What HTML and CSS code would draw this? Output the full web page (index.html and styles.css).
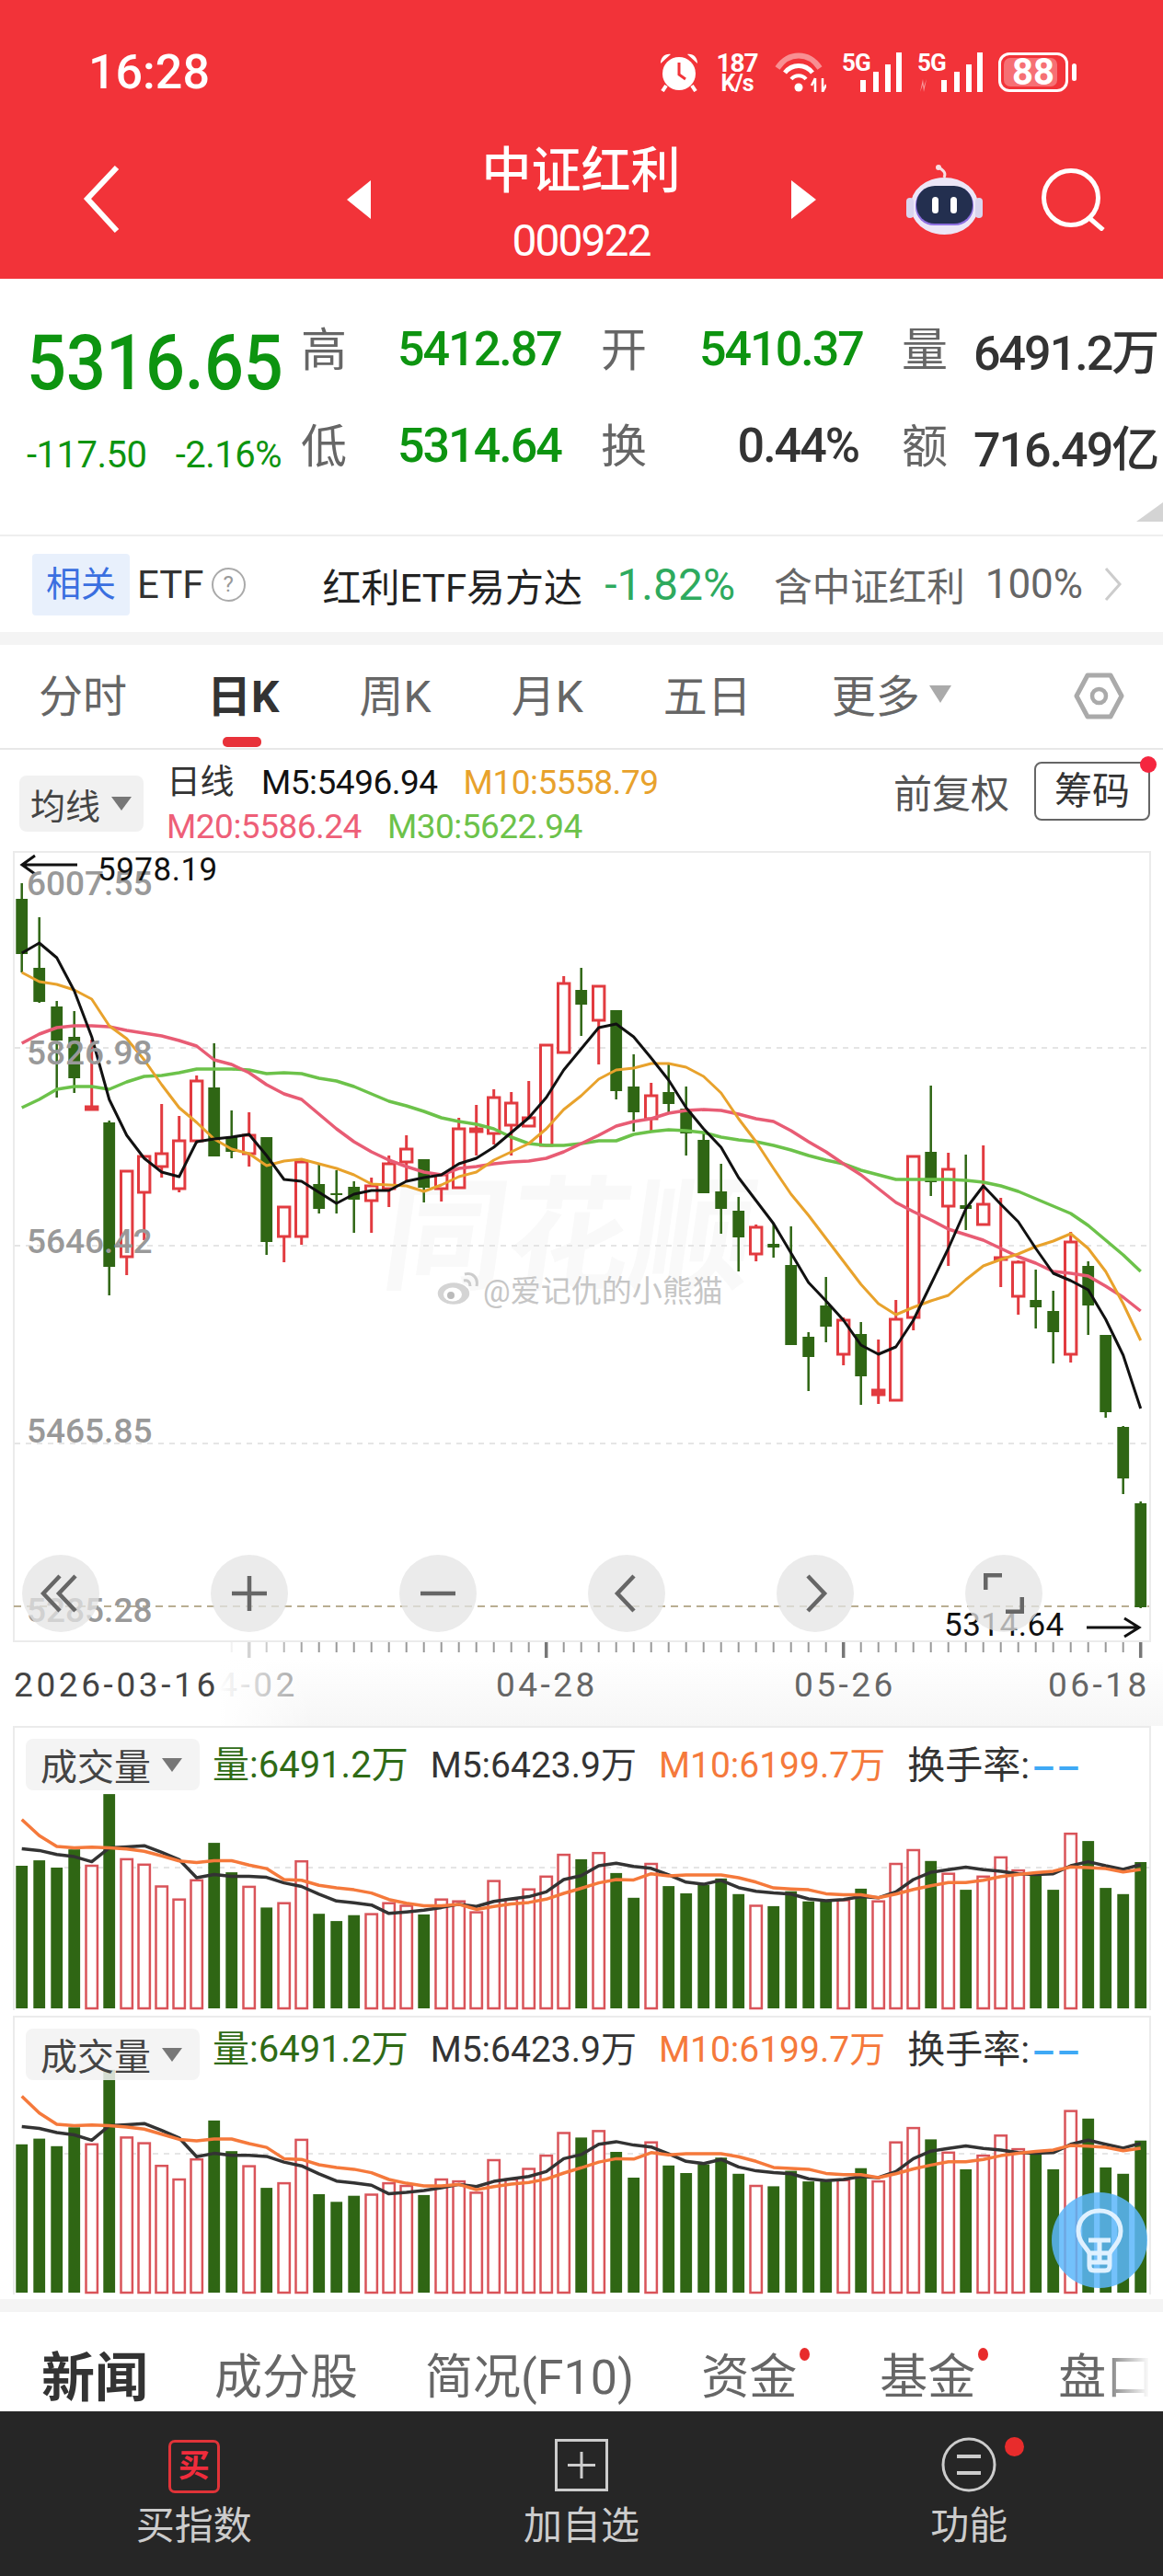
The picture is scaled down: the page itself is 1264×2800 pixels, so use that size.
FILE: index.html
```html
<!DOCTYPE html>
<html lang="zh-CN">
<head>
  <meta charset="UTF-8">
  <meta name="viewport" content="width=device-width, initial-scale=1.0">
  <title>中证红利 000922</title>
  <link rel="stylesheet" href="styles.css">
</head>
<body>
  <header class="top">
    <div class="status">
      <span class="time">16:28</span>
      <div class="status-icons">
        <svg width="44" height="43" viewBox="0 0 44 43">
          <circle cx="22" cy="23" r="18" fill="#fff"/>
          <path d="M22 11v13l7 5" fill="none" stroke="#f23339" stroke-width="3"/>
          <path d="M2 12C2 5 7 1 13 2L2 12zM42 12c0-7-5-11-11-10l11 10z" fill="#fff"/>
          <path d="M8 36l-4 6M36 36l4 6" stroke="#fff" stroke-width="4"/>
        </svg>
        <div class="speed"><span>187</span><span class="speed-unit">K/s</span></div>
        <svg width="56" height="43" viewBox="0 0 56 43">
          <path d="M3 17C15 -1 37 -1 49 17" fill="none" stroke="#fff" stroke-opacity=".45" stroke-width="6"/>
          <path d="M11 22C19 12 33 12 41 22" fill="none" stroke="#fff" stroke-width="5"/>
          <path d="M18 29C22 24 30 24 34 29" fill="none" stroke="#fff" stroke-width="4"/>
          <circle cx="26" cy="38" r="4.500" fill="#fff"/>
          <path d="M44 28v15M52 28v15M40 36l4-8M56 35l-4 8" fill="none" stroke="#fff" stroke-width="2.500"/>
        </svg>
        <div class="sig">
          <span>5G</span>
          <svg width="65" height="43" viewBox="0 0 65 43"><path d="M20 43V30h6v13zM34 43V21h6v22zM47 43V13h6v30zM59 43V0h6v43z" fill="#fff"/></svg>
        </div>
        <div class="sig sig-wide">
          <span>5G</span>
          <svg width="71" height="43" viewBox="0 0 71 43">
            <path d="M3 43l3-14 1 8 3-8-3 14-1-8z" fill="#fff" fill-opacity=".5"/>
            <path d="M26 43V30h6v13zM40 43V21h6v22zM53 43V13h6v30zM65 43V0h6v43z" fill="#fff"/>
          </svg>
        </div>
        <div class="battery"><span class="battery-fill"></span><span class="battery-num">88</span></div>
      </div>
    </div>
    <div class="nav">
      <svg class="back" width="41" height="75" viewBox="0 0 41 75"><path d="M37 3L5 37l32 35" fill="none" stroke="#fff" stroke-width="6"/></svg>
      <span class="tri-left"></span>
      <div class="title">
        <div class="name">中证红利</div>
        <div class="code">000922</div>
      </div>
      <span class="tri-right"></span>
      <svg class="robot" width="83" height="76" viewBox="0 0 83 76">
        <path d="M41 14C44 8 39 6 36 3" fill="none" stroke="#f7dfe4" stroke-width="3"/>
        <circle cx="35" cy="3" r="3" fill="#f7dfe4"/>
        <ellipse cx="41.500" cy="45" rx="37" ry="31" fill="#ece6f7"/>
        <rect x="0" y="36" width="8" height="22" rx="4" fill="#d9d5ee"/>
        <rect x="75" y="36" width="8" height="22" rx="4" fill="#d9d5ee"/>
        <rect x="10" y="24" width="63" height="42" rx="20" fill="#8d6fe0"/>
        <rect x="11" y="23" width="61" height="41" rx="20" fill="#232f4f"/>
        <rect x="28" y="35" width="7" height="18" rx="3.500" fill="#fff"/>
        <rect x="48" y="35" width="7" height="18" rx="3.500" fill="#fff"/>
      </svg>
      <svg class="search" width="70" height="68" viewBox="0 0 70 68"><circle cx="33" cy="32" r="29.500" fill="none" stroke="#fff" stroke-width="5"/><path d="M53 54l15 13" fill="none" stroke="#fff" stroke-width="5"/></svg>
    </div>
  </header>

  <section class="info">
    <div class="price">5316.65</div>
    <div class="lbl">高</div><div class="val down">5412.87</div>
    <div class="lbl">开</div><div class="val down">5410.37</div>
    <div class="lbl">量</div><div class="val">6491.2万</div>
    <div class="change"><span>-117.50</span><span>-2.16%</span></div>
    <div class="lbl">低</div><div class="val down">5314.64</div>
    <div class="lbl">换</div><div class="val right">0.44%</div>
    <div class="lbl">额</div><div class="val">716.49亿</div>
    <span class="corner"></span>
  </section>

  <section class="etf">
    <span class="chip-blue">相关</span>
    <span class="etf-name">ETF</span>
    <span class="help">?</span>
    <span class="fund">红利ETF易方达</span>
    <span class="fund-pct">-1.82%</span>
    <span class="fund-hold">含中证红利</span>
    <span class="fund-num">100%</span>
    <svg class="etf-arrow" width="21" height="38" viewBox="0 0 21 38"><path d="M3 2l15 17L3 36" fill="none" stroke="#ccc" stroke-width="3"/></svg>
  </section>
  <div class="strip"></div>

  <nav class="tabs">
    <span>分时</span>
    <span class="active">日K</span>
    <span>周K</span>
    <span>月K</span>
    <span>五日</span>
    <span class="more">更多<i class="caret-big"></i></span>
    <svg class="hex" width="55" height="51" viewBox="0 0 55 51"><path d="M3 25.500L15 3h25l12 22.500L40 48H15z" fill="none" stroke="#aaa" stroke-width="5" stroke-linejoin="round"/><circle cx="27.500" cy="25.500" r="7.500" fill="none" stroke="#aaa" stroke-width="4.500"/></svg>
  </nav>

  <section class="chart-head">
    <div class="chip">均线<i class="caret"></i></div>
    <div class="ma-lines">
      <div class="ma-row">
        <span class="ma-day">日线</span><span class="c-black">M5:5496.94</span><span class="c-orange">M10:5558.79</span>
      </div>
      <div class="ma-row">
        <span class="c-pink">M20:5586.24</span><span class="c-green">M30:5622.94</span>
      </div>
    </div>
    <span class="adjust">前复权</span>
    <span class="chips-btn">筹码</span>
  </section>

  <section class="kline">
    <div class="wm-big">同花顺</div>
    <svg id="kline-svg" class="plot" width="1233" height="856" viewBox="16 927 1233 856"></svg>
    <span class="ax-label l1">6007.55</span>
    <span class="ax-label l2">5826.98</span>
    <span class="ax-label l3">5646.42</span>
    <span class="ax-label l4">5465.85</span>
    <span class="ax-label l5">5285.28</span>
    <span class="mark m-high">5978.19</span>
    <span class="mark m-low">5314.64</span>
    <div class="weibo">
      <svg width="46" height="36" viewBox="0 0 46 36">
        <ellipse cx="19" cy="23" rx="18" ry="12.500" fill="#d4d4d4" stroke="#fff" stroke-width="1.500"/>
        <ellipse cx="18" cy="24" rx="10" ry="7.500" fill="#fff"/>
        <circle cx="16" cy="25" r="4" fill="#bbb"/>
        <path d="M30 9c4-1 7 1 7 6M31 2c9-2 15 4 13 13" fill="none" stroke="#ccc" stroke-width="3"/>
      </svg>
      <span>@爱记仇的小熊猫</span>
    </div>
    <div class="chart-btns">
      <span class="round"><svg width="44" height="44" viewBox="0 0 44 44"><path d="M21 3L3 22l18 19M38 3L20 22l18 19" fill="none" stroke="#666" stroke-width="4.500"/></svg></span>
      <span class="round"><svg width="44" height="44" viewBox="0 0 44 44"><path d="M22 3v38M3 22h38" fill="none" stroke="#666" stroke-width="4.500"/></svg></span>
      <span class="round"><svg width="44" height="44" viewBox="0 0 44 44"><path d="M3 22h38" fill="none" stroke="#666" stroke-width="4.500"/></svg></span>
      <span class="round"><svg width="44" height="44" viewBox="0 0 44 44"><path d="M30 3L12 22l18 19" fill="none" stroke="#666" stroke-width="4.500"/></svg></span>
      <span class="round"><svg width="44" height="44" viewBox="0 0 44 44"><path d="M14 3l18 19-18 19" fill="none" stroke="#666" stroke-width="4.500"/></svg></span>
      <span class="round"><svg width="44" height="44" viewBox="0 0 44 44"><path d="M2 18V2h18M42 26v16H24" fill="none" stroke="#666" stroke-width="5"/></svg></span>
    </div>
  </section>

  <div class="axis">
    <svg id="tick-svg" class="ticks" width="1264" height="91" viewBox="0 1785 1264 91"></svg>
    <span class="date d2">04-02</span>
    <span class="axis-fade"></span>
    <span class="date d1">2026-03-16</span>
    <span class="date d3">04-28</span>
    <span class="date d4">05-26</span>
    <span class="date d5">06-18</span>
  </div>

  <section class="vol">
    <svg id="vol-a" class="plot" width="1233" height="307" viewBox="16 1878 1233 307"></svg>
    <div class="vol-head">
      <div class="chip chip-vol">成交量<i class="caret"></i></div>
      <span class="c-dgreen">量:6491.2万</span>
      <span class="c-dark">M5:6423.9万</span>
      <span class="c-vorange">M10:6199.7万</span>
      <span class="c-turn">换手率:<b class="dashes">––</b></span>
    </div>
  </section>
  <section class="vol vol-second">
    <svg id="vol-b" class="plot" width="1233" height="301" viewBox="16 2193 1233 301"></svg>
    <div class="vol-head">
      <div class="chip chip-vol">成交量<i class="caret"></i></div>
      <span class="c-dgreen">量:6491.2万</span>
      <span class="c-dark">M5:6423.9万</span>
      <span class="c-vorange">M10:6199.7万</span>
      <span class="c-turn">换手率:<b class="dashes">––</b></span>
    </div>
    <div class="fab">
      <svg width="60" height="72" viewBox="0 0 60 72">
        <path d="M19 50C14 42 7 37 7 26C7 13 17 4 30 4s23 9 23 22c0 11-7 16-12 24z" fill="none" stroke="#dff1ff" stroke-width="5"/>
        <path d="M19 50v14q0 5 5 5h12q5 0 5-5V50M18 36h24M30 36v24M20 60h20" fill="none" stroke="#dff1ff" stroke-width="5"/>
      </svg>
    </div>
  </section>
  <div class="vol-end"></div>
  <div class="strip"></div>

  <nav class="news-tabs">
    <span class="news-active">新闻</span>
    <span>成分股</span>
    <span>简况(F10)</span>
    <span class="dot">资金</span>
    <span class="dot">基金</span>
    <span>盘口</span>
    <i class="news-fade"></i>
  </nav>

  <footer class="bottom">
    <div class="bottom-item">
      <span class="buy-icon">买</span>
      <span class="bottom-label">买指数</span>
    </div>
    <div class="bottom-item">
      <svg width="58" height="60" viewBox="0 0 58 60"><rect x="1.500" y="3.500" width="55" height="54" fill="none" stroke="#ccc" stroke-width="3"/><path d="M29 16v29M14 30.500h30" fill="none" stroke="#ccc" stroke-width="3"/></svg>
      <span class="bottom-label">加自选</span>
    </div>
    <div class="bottom-item">
      <span class="func-wrap">
        <svg width="60" height="60" viewBox="0 0 60 60"><circle cx="30" cy="30" r="28" fill="none" stroke="#ccc" stroke-width="3"/><path d="M17 21h26M17 39h26" stroke="#ccc" stroke-width="4"/></svg>
        <i class="func-dot"></i>
      </span>
      <span class="bottom-label">功能</span>
    </div>
  </footer>

  <script src="script.js"></script>
</body>
</html>
```

FILE: styles.css
```css
* {
  margin: 0;
  padding: 0;
  box-sizing: border-box;
}

body {
  width: 1264px;
  height: 2800px;
  overflow: hidden;
  background-color: #fff;
  font-family: Roboto, "Noto Sans CJK SC", sans-serif;
  color: #333;
}

i {
  font-style: normal;
}

/* top red bar */
.top {
  height: 303px;
  background-color: #f23339;
  color: #fff;
}

.status {
  height: 130px;
  padding: 57px 94px 0 96px;
  display: flex;
  justify-content: space-between;
}

.time {
  font-size: 52px;
  font-weight: 500;
  line-height: 44px;
}

.status-icons {
  display: flex;
  gap: 17px;
  height: 43px;
}

.speed {
  width: 48px;
  display: flex;
  flex-direction: column;
  align-items: center;
  font-size: 28px;
  font-weight: 700;
  line-height: 24px;
  letter-spacing: -1px;
}

.speed-unit {
  font-size: 25px;
  line-height: 20px;
}

.sig {
  position: relative;
  width: 65px;
  height: 43px;
}

.sig-wide {
  width: 71px;
}

.sig span {
  position: absolute;
  left: 0;
  top: -2px;
  font-size: 26px;
  font-weight: 700;
  line-height: 26px;
  letter-spacing: -1px;
}

.sig svg {
  position: absolute;
  left: 0;
  top: 0;
}

.battery {
  position: relative;
  width: 76px;
  height: 43px;
  margin-right: 9px;
  border: 3px solid #fff;
  border-radius: 12px;
  display: flex;
  align-items: center;
  justify-content: center;
}

.battery::after {
  content: "";
  position: absolute;
  right: -12px;
  top: 9px;
  width: 5px;
  height: 19px;
  border-radius: 3px;
  background-color: #fff;
}

.battery-fill {
  position: absolute;
  left: 3px;
  top: 3px;
  bottom: 3px;
  width: 58px;
  border-radius: 7px;
  background-color: rgba(255, 255, 255, 0.3);
}

.battery-num {
  position: relative;
  font-size: 40px;
  font-weight: 700;
  line-height: 1;
}

.nav {
  height: 173px;
  padding-left: 90px;
  display: flex;
  align-items: center;
}

.tri-left {
  margin-left: 246px;
  border-right: 26px solid #fff;
  border-top: 21px solid transparent;
  border-bottom: 21px solid transparent;
}

.tri-right {
  border-left: 27px solid #fff;
  border-top: 21px solid transparent;
  border-bottom: 21px solid transparent;
}

.title {
  width: 457px;
  padding-top: 11px;
  text-align: center;
}

.name {
  font-size: 54px;
  font-weight: 500;
  line-height: 60px;
}

.code {
  margin-top: 20px;
  font-size: 48px;
  line-height: 50px;
  letter-spacing: -2px;
}

.robot {
  margin-left: 98px;
}

.search {
  margin-left: 63px;
}

/* quote block */
.info {
  position: relative;
  height: 280px;
  padding: 24px 0 0 29px;
  border-bottom: 2px solid #eee;
  display: grid;
  grid-template-columns: 298px 105px 221px 107px 220px 78px 204px;
  grid-template-rows: 105px 105px;
  align-items: center;
}

.lbl {
  margin-bottom: 8px;
  font-size: 50px;
  color: #666;
}

.val {
  font-size: 52px;
  font-weight: 500;
  letter-spacing: -2px;
  white-space: nowrap;
}

.down {
  color: #0d9410;
}

.right {
  padding-right: 47px;
  text-align: right;
}

.price {
  margin-top: 30px;
  font-size: 84px;
  font-weight: 500;
  line-height: 1;
  color: #0d9410;
  transform: scaleX(0.9);
  transform-origin: left;
}

.change {
  margin-top: 20px;
  width: 277px;
  display: flex;
  justify-content: space-between;
  font-size: 40px;
  letter-spacing: -0.500px;
  color: #0d9410;
}

.corner {
  position: absolute;
  right: 0;
  bottom: 14px;
  border-left: 29px solid transparent;
  border-bottom: 21px solid #d4d4d4;
}

/* related etf row */
.etf {
  height: 104px;
  padding-left: 35px;
  display: flex;
  align-items: center;
  font-size: 42px;
  white-space: nowrap;
}

.chip-blue {
  width: 106px;
  height: 67px;
  border-radius: 4px;
  background-color: #e8f0fc;
  color: #3a6fe0;
  font-size: 38px;
  line-height: 67px;
  text-align: center;
}

.etf-name {
  margin-left: 8px;
  font-size: 42px;
}

.help {
  margin-left: 8px;
  width: 37px;
  height: 37px;
  border: 2px solid #aaa;
  border-radius: 50%;
  color: #999;
  font-size: 24px;
  line-height: 33px;
  text-align: center;
}

.fund {
  margin-left: 84px;
  color: #222;
}

.fund-pct {
  margin-left: 24px;
  font-size: 48px;
  color: #2eaa5e;
}

.fund-hold {
  margin-left: 42px;
  font-size: 41.500px;
  color: #666;
}

.fund-num {
  margin-left: 22px;
  font-size: 44px;
  color: #666;
}

.etf-arrow {
  margin-left: 22px;
}

.strip {
  height: 14px;
  background-color: #f4f4f4;
}

/* period tabs */
.tabs {
  position: relative;
  height: 114px;
  padding: 24px 0 0 42px;
  border-bottom: 2px solid #e8e8e8;
  display: flex;
  gap: 87px;
  align-items: flex-start;
  font-size: 48px;
  line-height: 66px;
  color: #666;
}

.active {
  position: relative;
  font-weight: 700;
  color: #333;
}

.active::after {
  content: "";
  position: absolute;
  left: 17px;
  bottom: -21px;
  width: 42px;
  height: 11px;
  border-radius: 5px;
  background-color: #e8323a;
}

.more {
  display: flex;
  align-items: center;
  gap: 10px;
}

.caret-big {
  margin-top: -8px;
  border-top: 19px solid #aaa;
  border-left: 12px solid transparent;
  border-right: 12px solid transparent;
}

.hex {
  position: absolute;
  left: 1167px;
  top: 30px;
}

/* chart header */
.chart-head {
  position: relative;
  height: 110px;
  padding-left: 21px;
  display: flex;
  align-items: flex-start;
}

.chip {
  margin-top: 28px;
  width: 135px;
  height: 61px;
  padding-left: 12px;
  border-radius: 8px;
  background-color: #f1f1f1;
  display: flex;
  align-items: center;
  font-size: 38px;
  color: #444;
}

.caret {
  margin-left: 12px;
  border-top: 15px solid #777;
  border-left: 11px solid transparent;
  border-right: 11px solid transparent;
}

.ma-lines {
  margin: 12px 0 0 25px;
  font-size: 37px;
  line-height: 48px;
  letter-spacing: -0.500px;
}

.ma-row {
  display: flex;
  gap: 28px;
  white-space: nowrap;
}

.ma-day {
  color: #333;
  margin-left: 0;
  margin-right: 2px;
}

.c-black {
  color: #111;
}

.c-orange {
  color: #e8a22c;
}

.c-pink {
  color: #ee5f78;
}

.c-green {
  color: #6cc24a;
}

.adjust {
  position: absolute;
  left: 971px;
  top: 14px;
  font-size: 42px;
  color: #555;
}

.chips-btn {
  position: absolute;
  left: 1124px;
  top: 13px;
  width: 126px;
  height: 64px;
  border: 2px solid #666;
  border-radius: 8px;
  font-size: 41px;
  line-height: 60px;
  text-align: center;
  color: #333;
}

.chips-btn::after {
  content: "";
  position: absolute;
  right: -9px;
  top: -8px;
  width: 18px;
  height: 18px;
  border-radius: 50%;
  background-color: #f5263f;
}

/* k line chart */
.kline {
  position: relative;
  margin-left: 14px;
  width: 1237px;
  height: 860px;
  border: 2px solid #ebebeb;
}

.plot {
  position: absolute;
  left: 0;
  top: 0;
  overflow: visible;
}

.wm-big {
  position: absolute;
  left: 402px;
  top: 352px;
  font-size: 134px;
  font-weight: 700;
  line-height: 1;
  color: #f9f9f9;
  transform: skewX(-8deg);
  white-space: nowrap;
}

.ax-label {
  position: absolute;
  left: 13px;
  font-size: 37px;
  font-weight: 500;
  line-height: 36px;
  color: #999;
}

.l1 { top: 16px; }
.l2 { top: 200px; }
.l3 { top: 405px; }
.l4 { top: 611px; }
.l5 { top: 806px; }

.mark {
  position: absolute;
  font-size: 35px;
  line-height: 34px;
  letter-spacing: 0.500px;
  color: #111;
}

.m-high {
  left: 90px;
  top: 2px;
}

.m-low {
  left: 1010px;
  top: 823px;
}

.weibo {
  position: absolute;
  left: 458px;
  top: 450px;
  display: flex;
  align-items: center;
  gap: 5px;
  font-size: 33px;
  color: #c6c6c6;
  text-shadow: 0 0 2px #fff;
  white-space: nowrap;
}

.chart-btns {
  position: absolute;
  left: 8px;
  top: 763px;
  display: flex;
  gap: 121px;
}

.round {
  width: 84px;
  height: 84px;
  border-radius: 50%;
  background-color: rgba(228, 228, 228, 0.75);
  display: flex;
  align-items: center;
  justify-content: center;
}

/* date axis */
.axis {
  position: relative;
  height: 91px;
  background: linear-gradient(#fff 20%, #f6f6f6);
}

.ticks {
  position: absolute;
  left: 0;
  top: 0;
}

.date {
  position: absolute;
  top: 28px;
  font-size: 37px;
  line-height: 38px;
  letter-spacing: 3.500px;
  color: #666;
  white-space: nowrap;
}

.d1 { left: 15px; color: #444; letter-spacing: 3.600px; }
.d2 { left: 213px; color: #999; }
.d3 { left: 539px; }
.d4 { left: 863px; }
.d5 { left: 1139px; }

.axis-fade {
  position: absolute;
  left: 0;
  top: 0;
  bottom: 0;
  width: 340px;
  background: linear-gradient(to right, #fff 70%, rgba(255, 255, 255, 0));
}

/* volume panels */
.vol {
  position: relative;
  margin-left: 14px;
  width: 1237px;
  height: 309px;
  padding: 12px 0 0 12px;
  border: 2px solid #ebebeb;
  border-bottom: none;
}

.vol-second {
  margin-top: 6px;
  height: 303px;
}

.vol-head {
  position: relative;
  display: flex;
  align-items: center;
  gap: 24px;
  height: 56px;
  font-size: 39px;
  white-space: nowrap;
}

.vol-head > span {
  margin-top: -6px;
}

.vol-second .vol-head > span {
  margin-top: -18px;
}

.chip-vol {
  margin: 0 -10px 0 0;
  width: 189px;
  height: 56px;
  padding-left: 16px;
  font-size: 40px;
  background-color: rgba(242, 242, 242, 0.85);
}

.c-dgreen {
  font-size: 40px;
  color: #2f6b16;
}

.c-dark {
  color: #333;
}

.c-vorange {
  color: #f5793b;
}

.c-turn {
  font-size: 41px;
  color: #333;
}

.dashes {
  margin-left: 4px;
  font-family: "Liberation Sans", sans-serif;
  font-weight: 700;
  letter-spacing: 4px;
  color: #3fa9f5;
}

.fab {
  position: absolute;
  left: 1127px;
  top: 190px;
  width: 104px;
  height: 104px;
  border-radius: 50%;
  background-color: rgba(90, 182, 250, 0.85);
  display: flex;
  align-items: center;
  justify-content: center;
}

.vol-end {
  height: 5px;
}

/* news tabs */
.news-tabs {
  position: relative;
  height: 108px;
  padding: 36px 0 0 45px;
  display: flex;
  gap: 73px;
  align-items: center;
  font-size: 52px;
  line-height: 60px;
  color: #666;
  white-space: nowrap;
  overflow: hidden;
}

.news-active {
  margin-right: -1px;
  font-size: 58px;
  font-weight: 700;
  color: #333;
}

.dot {
  position: relative;
  padding-right: 17px;
}

.dot::after {
  content: "";
  position: absolute;
  right: 3px;
  top: -3px;
  width: 11px;
  height: 14px;
  border-radius: 50%;
  background-color: #e82c2c;
}

.news-fade {
  position: absolute;
  right: 0;
  top: 0;
  bottom: 0;
  width: 70px;
  background: linear-gradient(to right, rgba(255, 255, 255, 0), #fff 80%);
}

/* bottom bar */
.bottom {
  height: 179px;
  padding-top: 28px;
  background-color: #262626;
  display: grid;
  grid-template-columns: repeat(3, 1fr);
}

.bottom-item {
  display: flex;
  flex-direction: column;
  align-items: center;
  height: 118px;
  justify-content: space-between;
}

.bottom-label {
  font-size: 42px;
  line-height: 42px;
  color: #ccc;
}

.buy-icon {
  margin-top: 3px;
  width: 56px;
  height: 58px;
  border: 3px solid #e03338;
  border-radius: 7px;
  font-size: 34px;
  font-weight: 700;
  line-height: 50px;
  text-align: center;
  color: #f02c3c;
}

.func-wrap {
  position: relative;
  width: 60px;
  height: 60px;
}

.func-dot {
  position: absolute;
  left: 69px;
  top: 0;
  width: 21px;
  height: 21px;
  border-radius: 50%;
  background-color: #e82c2c;
}
```

FILE: script.js
```js
// k line data, all values are page pixel y positions read off the chart
// [up?, wick top, body top, body bottom, wick bottom]
const candles = [
  [0,960,977,1037,1057],[0,997,1052,1089,1090],[0,1088,1094,1131,1193],[0,1099,1127,1172,1188],
  [1,1130,1203,1206,1206],[0,1218,1220,1377,1408],[1,1273,1273,1366,1386],[1,1257,1257,1296,1348],
  [1,1200,1254,1268,1280],[1,1213,1240,1292,1296],[1,1169,1175,1240,1243],[0,1134,1182,1257,1257],
  [0,1207,1236,1252,1259],[1,1209,1234,1254,1268],[0,1236,1236,1350,1364],[1,1312,1312,1344,1372],
  [1,1259,1263,1344,1353],[0,1266,1287,1314,1319],[0,1272,1297,1299,1319],[0,1284,1290,1304,1340],
  [1,1280,1289,1305,1340],[1,1256,1265,1292,1312],[1,1234,1249,1263,1285],[0,1260,1260,1291,1307],
  [1,1277,1277,1292,1306],[1,1215,1227,1291,1291],[1,1201,1227,1230,1256],[1,1184,1193,1232,1244],
  [1,1187,1199,1223,1256],[1,1175,1215,1224,1224],[1,1136,1136,1245,1245],[1,1061,1069,1144,1144],
  [0,1052,1076,1092,1126],[1,1071,1072,1109,1157],[0,1098,1098,1186,1195],[0,1146,1181,1209,1230],
  [1,1177,1191,1216,1229],[0,1155,1187,1200,1211],[0,1181,1205,1232,1256],[0,1231,1239,1297,1297],
  [0,1265,1295,1314,1341],[0,1301,1316,1345,1382],[1,1331,1334,1363,1371],[0,1330,1352,1356,1367],
  [0,1333,1375,1462,1462],[0,1448,1453,1475,1512],[0,1388,1419,1442,1459],[1,1432,1435,1472,1484],
  [0,1437,1450,1496,1527],[1,1456,1511,1516,1526],[1,1413,1434,1522,1522],[1,1257,1257,1432,1446],
  [0,1180,1252,1285,1300],[1,1253,1271,1311,1376],[0,1255,1310,1314,1337],[1,1245,1309,1331,1331],
  [1,1302,1367,1369,1399],[1,1370,1372,1409,1429],[0,1380,1413,1421,1444],[0,1403,1425,1448,1482],
  [1,1339,1350,1472,1481],[0,1371,1376,1419,1451],[0,1451,1451,1535,1541],[0,1550,1551,1607,1624],
  [0,1632,1634,1747,1748]
];

const ma5 = [1036,1025,1041,1077,1127,1195,1234,1259,1274,1279,1241,1238,1236,1233,1256,1282,1284,1296,1308,1298,1294,1294,1284,1280,1277,1265,1259,1247,1231,1215,1193,1163,1140,1117,1113,1127,1150,1174,1204,1227,1247,1280,1305,1330,1362,1394,1414,1435,1462,1472,1464,1435,1396,1357,1314,1289,1309,1328,1357,1384,1392,1402,1434,1473,1531];
const ma10 = [1057,1067,1070,1076,1086,1115,1129,1152,1179,1204,1220,1238,1249,1254,1267,1262,1260,1265,1270,1277,1287,1288,1289,1295,1288,1279,1274,1261,1252,1243,1227,1206,1191,1173,1163,1161,1156,1156,1160,1170,1188,1216,1241,1270,1298,1321,1346,1371,1396,1417,1429,1421,1414,1408,1391,1376,1369,1363,1355,1349,1341,1357,1382,1417,1457];
const ma20 = [1134,1124,1117,1115,1115,1116,1120,1123,1126,1131,1137,1152,1157,1166,1179,1189,1195,1211,1227,1241,1252,1261,1268,1274,1277,1270,1268,1265,1263,1262,1259,1252,1243,1234,1224,1219,1216,1210,1207,1206,1207,1211,1216,1219,1229,1241,1252,1265,1277,1292,1307,1317,1326,1336,1342,1348,1357,1366,1373,1382,1384,1387,1398,1410,1425];
const ma30 = [1204,1195,1184,1181,1181,1184,1176,1170,1169,1166,1162,1162,1162,1163,1167,1166,1167,1172,1175,1181,1189,1197,1202,1208,1215,1219,1222,1227,1236,1243,1245,1245,1243,1240,1240,1233,1230,1228,1229,1231,1236,1239,1241,1245,1250,1256,1261,1265,1272,1277,1282,1282,1282,1282,1283,1285,1289,1295,1303,1311,1319,1332,1348,1364,1382];

// volume values, y positions inside the first panel (2.53x zoom units)
const volTops = [425,410,430,380,425,228,407,422,482,518,465,362,443,483,540,528,413,557,577,561,558,528,535,559,518,523,553,467,518,490,455,395,407,390,445,513,420,481,501,478,460,503,535,536,495,523,523,520,488,523,420,382,412,447,491,455,402,438,447,491,337,357,486,503,415];
const volM5 = [378,383,394,400,414,376,373,370,388,408,458,449,454,454,457,472,482,503,522,527,533,556,552,547,540,531,537,523,516,510,497,463,452,425,418,427,432,450,470,476,465,485,495,500,503,516,521,518,510,513,497,463,443,436,429,436,440,447,449,447,425,414,425,435,422];
const volM10 = [298,342,372,376,374,376,379,385,398,412,416,411,411,423,433,463,465,479,486,491,500,518,528,535,535,531,545,537,530,526,517,501,487,472,463,464,447,453,450,450,450,458,470,486,489,491,502,505,505,513,503,490,480,471,471,465,455,449,444,440,428,430,433,442,435];

const RED = '#e23b40';
const GREEN = '#2f6614';

function centerX(i) {
  return 23.7 + 19 * i;
}

function polyline(values, color, width) {
  const pts = values.map((y, i) => centerX(i).toFixed(1) + ',' + y).join(' ');
  return `<polyline points="${pts}" fill="none" stroke="${color}" stroke-width="${width}" stroke-linejoin="round"/>`;
}

function drawKline() {
  let out = '';

  // grid lines
  [1139, 1354, 1569].forEach(y => {
    out += `<path d="M16 ${y}H1249" stroke="#ddd" stroke-width="1.500" stroke-dasharray="6 6"/>`;
  });
  out += '<path d="M15 1746H1249" stroke="#b9ae92" stroke-width="2" stroke-dasharray="8 6"/>';

  candles.forEach((c, i) => {
    const x = centerX(i);
    const color = c[0] ? RED : GREEN;
    const wick = c[0] ? 3 : 2.5;
    out += `<path d="M${x} ${c[1]}V${c[4]}" stroke="${color}" stroke-width="${wick}"/>`;
    if (c[0]) {
      const h = Math.max(c[3] - c[2], 1);
      const fill = h < 6 ? RED : '#fff';
      out += `<rect x="${x - 6.2}" y="${c[2]}" width="12.400" height="${h}" fill="${fill}" stroke="${color}" stroke-width="3"/>`;
    } else {
      out += `<rect x="${x - 6.4}" y="${c[2]}" width="12.800" height="${c[3] - c[2]}" fill="${color}"/>`;
    }
  });

  out += polyline(ma30, '#6cc24a', 3.5);
  out += polyline(ma20, '#e85c74', 3.5);
  out += polyline(ma10, '#e8a22c', 3);
  out += polyline(ma5, '#111', 3);

  // high and low arrows
  out += '<path d="M84 940H24M38 930L24 940l14 10" fill="none" stroke="#111" stroke-width="3"/>';
  out += '<path d="M1181 1769H1238M1222 1759l16 10-16 10" fill="none" stroke="#111" stroke-width="3"/>';

  document.getElementById('kline-svg').innerHTML = out;
}

function drawTicks() {
  let out = '';
  candles.forEach((c, i) => {
    const major = i % 17 === 13;
    const x = centerX(i).toFixed(1);
    out += `<path d="M${x} 1785V${major ? 1802 : 1796}" stroke="${major ? '#777' : '#999'}" stroke-width="${major ? 3.5 : 2}"/>`;
  });
  document.getElementById('tick-svg').innerHTML = out;
}

// draw one volume panel; bottom is the base line, scale stretches the bars
function drawVolume(id, bottom, scale, gridY) {
  const toY = z => bottom - (2183 - (1860 + z / 2.53)) * scale;
  let out = `<path d="M70 ${gridY}H1249" stroke="#ddd" stroke-width="1.500" stroke-dasharray="6 6"/>`;

  volTops.forEach((z, i) => {
    const x = centerX(i);
    const y = toY(z);
    if (candles[i][0]) {
      out += `<rect x="${x - 6.2}" y="${y.toFixed(1)}" width="12.400" height="${(bottom - y).toFixed(1)}" fill="#fff" stroke="#d9545a" stroke-width="2.500"/>`;
    } else {
      out += `<rect x="${x - 6.4}" y="${y.toFixed(1)}" width="12.800" height="${(bottom - y).toFixed(1)}" fill="${GREEN}"/>`;
    }
  });

  out += polyline(volM5.map(z => +toY(z).toFixed(1)), '#333', 3.5);
  out += polyline(volM10.map(z => +toY(z).toFixed(1)), '#f5793b', 3.5);
  document.getElementById(id).innerHTML = out;
}

drawKline();
drawTicks();
drawVolume('vol-a', 2183, 1, 2030);
drawVolume('vol-b', 2492, 1.04, 2341);
```
